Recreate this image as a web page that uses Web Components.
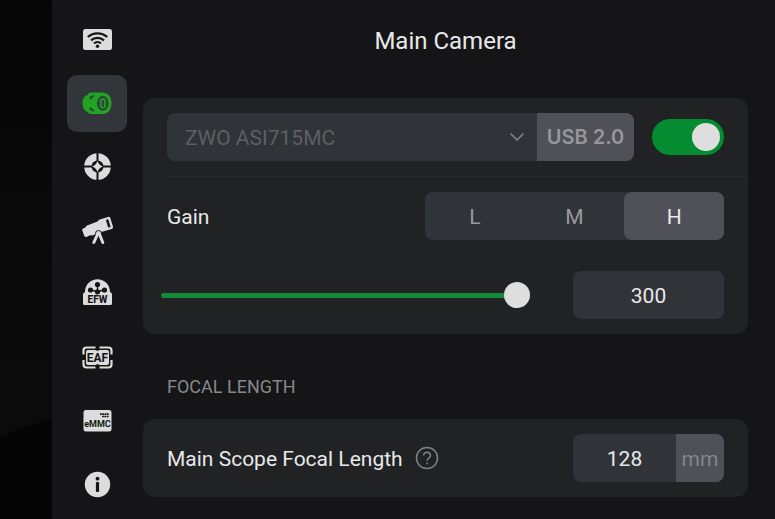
<!DOCTYPE html>
<html lang="en">
<head>
<meta charset="utf-8">
<meta name="viewport" content="width=device-width, initial-scale=1">
<title>Main Camera</title>
<style>
  :root {
    --panel: #151517;
    --card: #212224;
    --field: #303338;
    --raised: #505058;
    --green: #068c30;
    --knob: #dedede;
    --text: #e8e8e8;
    --muted: #9a9a9d;
  }
  body {
    margin: 0;
    background: #080808;
    color: var(--text);
    font-family: Roboto, "Liberation Sans", sans-serif;
    font-size: 21px;
    line-height: 24px;
  }
</style>
</head>
<body>
<camera-settings>
  <side-nav slot="nav">
    <nav-item label="Wi-Fi" icon="wifi"></nav-item>
    <nav-item label="Main camera" icon="camera" active></nav-item>
    <nav-item label="Guide camera" icon="guide"></nav-item>
    <nav-item label="Telescope" icon="scope"></nav-item>
    <nav-item label="Filter wheel" icon="efw"></nav-item>
    <nav-item label="Focuser" icon="eaf"></nav-item>
    <nav-item label="Storage" icon="emmc"></nav-item>
    <nav-item label="About" icon="info"></nav-item>
  </side-nav>
  <span slot="title">Main Camera</span>
  <settings-card>
    <camera-picker></camera-picker>
    <card-divider></card-divider>
    <gain-choice>Gain</gain-choice>
    <gain-slider></gain-slider>
  </settings-card>
  <section-title>FOCAL LENGTH</section-title>
  <settings-card>
    <length-field unit="mm" value="128">Main Scope Focal Length</length-field>
  </settings-card>
</camera-settings>

<script>
const RESET = `
  *, *::before, *::after { box-sizing: border-box; }
  button, input, select { font: inherit; color: inherit; margin: 0; padding: 0; border: 0; background: none; min-width: 0; }
  :focus-visible { outline: 2px solid #6b6b75; outline-offset: 2px; }
`;

function define(name, render) {
  customElements.define(name, class extends HTMLElement {
    constructor() {
      super();
      this.attachShadow({ mode: 'open' });
    }
    connectedCallback() {
      const t = document.createElement('template');
      t.innerHTML = render(this);
      this.shadowRoot.replaceChildren(t.content.cloneNode(true));
    }
  });
}

const L = '#dcdcdc', D = '#151517';
const ICONS = {
  wifi: `<rect x="3" y="7" width="29" height="21" rx="2.500" fill="${L}"/>
    <g fill="none" stroke="${D}" stroke-width="2.300"><path d="M7.800 15a14.500 14.500 0 0 1 19.400 0"/><path d="M11 18.400a9.600 9.600 0 0 1 13 0"/><path d="M14 21.500a5.200 5.200 0 0 1 7 0"/></g>
    <circle cx="17.500" cy="24.200" r="1.700" fill="${D}"/>`,
  camera: `<path d="M11 6.500H23.500Q31.500 8 31.500 17.300T23.500 28H11Q8 27.800 7.500 25.500H6.500Q2.500 23.500 2.500 17.300T6.500 9.200H7.500Q8 6.800 11 6.500z" fill="#22a322"/>
    <path d="M14.300 9.200Q10.200 9 9 12.600l2.200 1Q12 11 14.300 10.600zM14.300 25.400Q10.200 25.600 9 22l2.200-1Q12 23.600 14.300 24z" fill="#2b4a35"/>
    <ellipse cx="22.800" cy="17.300" rx="5.900" ry="7.500" fill="#294a33"/>
    <rect x="20.800" y="13.200" width="4" height="8.200" rx="1.200" fill="none" stroke="#22a322" stroke-width="1.500"/>`,
  guide: `<circle cx="17.500" cy="17.500" r="13.300" fill="${L}"/>
    <path d="M17.500 3v10M17.500 22v10M3 17.500h10M22 17.500h10" stroke="${D}" stroke-width="2"/>
    <circle cx="17.500" cy="17.500" r="6" fill="${D}"/>
    <path d="M17.500 12q1.400 4.100 5.500 5.500-4.100 1.400-5.500 5.500-1.400-4.100-5.500-5.500 4.100-1.400 5.500-5.500z" fill="${L}"/>`,
  scope: `<path d="M6.500 12.800L17.500 8.600l1.500-1.800 9-2.900q1.800-.4 2.400 1.300l2.600 8.500q.3 1.700-1.300 2.200L23 18.500l-3 .5-7.500 3.500-2.500-.3-3.500 1.700q-1.800.4-2.400-1.300L2.300 17.500q-.3-1.800 1.200-2.300l2-.6z" fill="${L}"/>
    <path d="M26.300 7.200l1.700-.5 2.200 7-1.700.5z" fill="${D}" stroke="${D}" stroke-width=".8"/>
    <circle cx="18.500" cy="20.500" r="3" fill="${L}" stroke="${D}"/>
    <path d="M17 22.500l-3.200 7M20 22.500l2.800 7" stroke="${L}" stroke-width="3" stroke-linecap="round"/>`,
  efw: `<path d="M5 16C5 8 11 3.200 17.500 3.200S30 8 30 16c1.500.5 2 1.300 2 3v8.500q0 1.500-1.500 1.500h-26Q3 29 3 27.500V19q0-2.500 2-3z" fill="${L}"/>
    <g fill="${D}"><circle cx="17.500" cy="8.500" r="2.600"/><circle cx="10.500" cy="14" r="2.600"/><circle cx="24.500" cy="14" r="2.600"/><circle cx="17.500" cy="15.800" r="2.600"/></g>
    <path d="M17.500 8v8M10.500 14l7 1.500 7-1.500" fill="none" stroke="${D}" stroke-width="1.300"/>
    <text x="17.500" y="27" text-anchor="middle" font-size="10" font-weight="800" fill="${D}">EFW</text>`,
  eaf: `<path d="M15.500 7.500h-9q-3 0-3 3v4M3.500 20v4.500q0 3 3 3h9M19.500 27.500h9q3 0 3-3V20M31.500 14.500v-4q0-3-3-3h-9" fill="none" stroke="${L}" stroke-width="2.200"/>
    <path d="M8 10h7.500l2 1 2-1H27q2 0 2 2v11q0 2-2 2h-7.500l-2-1-2 1H8q-2 0-2-2V12q0-2 2-2z" fill="${L}"/>
    <text x="17.500" y="22" text-anchor="middle" font-size="12" font-weight="700" fill="${D}">EAF</text>`,
  emmc: `<rect x="3.500" y="7" width="28" height="21.500" rx="2.500" fill="${L}"/>
    <path d="M20 11.200h9M22 13.500h7" stroke="${D}" stroke-width="1.700" stroke-dasharray="1.800 .5"/>
    <text x="17.500" y="24" text-anchor="middle" font-size="9" font-weight="700" fill="${D}">eMMC</text>`,
  info: `<circle cx="17.500" cy="17.500" r="12.700" fill="${L}"/>
    <circle cx="17.500" cy="11.700" r="1.900" fill="${D}"/><rect x="15.900" y="15" width="3.200" height="10" rx="1" fill="${D}"/>`
};

define('camera-settings', () => `
  <style>${RESET}
    :host { display: grid; grid-template-columns: 52px 91px minmax(0, 1fr); min-height: 100vh; background: var(--panel); }
    .sky { background: linear-gradient(#060607, #0b0b0c 75%); display: flex; align-items: flex-end; overflow: hidden; }
    .sky svg { display: block; width: 100%; height: 101px; }
    main { padding: 27px 27px 22px 0; }
    h1 { margin: 0 0 43px; text-align: center; font-size: 24px; line-height: 28px; font-weight: 400; }
  </style>
  <div class="sky"><svg viewBox="0 0 52 101" preserveAspectRatio="none" aria-hidden="true"><path d="M0 19Q26 7 52 1V101H0z" fill="#050506"/></svg></div>
  <slot name="nav"></slot>
  <main><h1><slot name="title"></slot></h1><slot></slot></main>`);

define('side-nav', () => `
  <style>${RESET}
    :host { display: grid; }
    nav { display: flex; flex-direction: column; align-items: center; justify-content: space-between; padding: 11px 1px 6px 0; }
  </style>
  <nav aria-label="Devices"><slot></slot></nav>`);

define('nav-item', el => `
  <style>${RESET}
    :host { display: block; }
    button { display: grid; place-items: center; width: 60px; height: 57px; border-radius: 10px; cursor: pointer; }
    :host([active]) button { background: #323539; }
    svg { display: block; width: 36px; height: 35px; }
  </style>
  <button type="button" aria-label="${el.getAttribute('label')}"${el.hasAttribute('active') ? ' aria-current="page"' : ''}>
    <svg viewBox="-1 0 36 35" aria-hidden="true">${ICONS[el.getAttribute('icon')]}</svg>
  </button>`);

define('settings-card', () => `
  <style>
    :host { display: block; padding: 15px 24px; border-radius: 12px; background: var(--card); }
  </style><slot></slot>`);

define('card-divider', () => `
  <style>:host { display: block; height: 1px; margin: 15px -24px 15px 0; background: #28292c; }</style>`);

define('section-title', () => `
  <style>
    :host { display: block; padding: 41px 24px 20px; }
    h2 { margin: 0; font-size: 18px; line-height: 24px; font-weight: 400; color: #88888b; }
  </style><h2><slot></slot></h2>`);

define('camera-picker', () => `
  <style>${RESET}
    :host { display: flex; align-items: center; gap: 18px; }
    .group { flex: 1; display: flex; height: 48px; border-radius: 8px; overflow: hidden; background: var(--field); }
    .pick { flex: 1; display: grid; min-width: 0; }
    .pick > * { grid-area: 1 / 1; }
    select { appearance: none; width: 100%; padding: 2px 40px 0 18px; color: #5d5f62; opacity: 1; }
    svg { align-self: center; justify-self: end; width: 16px; height: 10px; margin-right: 12px; pointer-events: none; }
    .usb { display: grid; place-items: center; width: 97px; background: var(--raised); color: #97979b; font: 600 20px/24px Inter, sans-serif; }
    .switch { appearance: none; display: flex; align-items: center; justify-content: flex-end; width: 72px; height: 36px; padding: 0 4px; border-radius: 18px; background: var(--green); cursor: pointer; }
    .switch::before { content: ""; width: 28px; height: 28px; border-radius: 50%; background: var(--knob); }
    .switch:not(:checked) { justify-content: flex-start; background: var(--raised); }
  </style>
  <div class="group">
    <div class="pick">
      <select aria-label="Camera" disabled><option>ZWO ASI715MC</option></select>
      <svg viewBox="0 0 16 10" aria-hidden="true"><path d="M1.500 1.500L8 8l6.500-6.500" fill="none" stroke="#85868a" stroke-width="1.500"/></svg>
    </div>
    <span class="usb">USB 2.0</span>
  </div>
  <input class="switch" type="checkbox" role="switch" aria-label="Camera connected" checked>`);

define('gain-choice', () => `
  <style>${RESET}
    :host { display: flex; align-items: center; justify-content: space-between; }
    #name { padding-top: 2px; }
    .choices { display: grid; grid-template-columns: repeat(3, 1fr); width: 299px; height: 48px; border-radius: 8px; background: var(--field); }
    label { display: grid; place-items: center; border-radius: 8px; color: var(--muted); cursor: pointer; }
    label > * { grid-area: 1 / 1; }
    label span { padding-top: 2px; }
    input { appearance: none; width: 100%; height: 100%; border-radius: 8px; cursor: pointer; }
    label:has(:checked) { background: var(--raised); color: var(--text); }
  </style>
  <span id="name"><slot></slot></span>
  <div class="choices" role="radiogroup" aria-labelledby="name">
    <label><input type="radio" name="gain"><span>L</span></label>
    <label><input type="radio" name="gain"><span>M</span></label>
    <label><input type="radio" name="gain" checked><span>H</span></label>
  </div>`);

define('gain-slider', () => `
  <style>${RESET}
    :host { display: flex; align-items: center; gap: 43px; margin: 31px 0 0 -6px; }
    .range { appearance: none; flex: 1; height: 26px; cursor: pointer; }
    .range::-webkit-slider-runnable-track { height: 5px; border-radius: 3px; background: #128a38; }
    .range::-webkit-slider-thumb { appearance: none; width: 26px; height: 26px; margin-top: -11px; border-radius: 50%; background: var(--knob); }
    .value { width: 151px; height: 48px; padding-top: 2px; border-radius: 8px; background: var(--field); text-align: center; }
  </style>
  <input class="range" type="range" min="0" max="300" value="300" aria-label="Gain">
  <input class="value" type="text" inputmode="numeric" value="300" aria-label="Gain value">`);

define('length-field', el => `
  <style>${RESET}
    :host { display: flex; align-items: center; gap: 12px; }
    label { padding-top: 2px; }
    .help { display: block; width: 24px; height: 24px; cursor: pointer; }
    .help svg { display: block; width: 24px; height: 24px; }
    .box { display: flex; width: 151px; height: 48px; margin-left: auto; border-radius: 8px; overflow: hidden; background: var(--field); }
    .box input { flex: 1; padding-top: 2px; text-align: center; }
    .unit { display: grid; place-items: center; width: 48px; padding-top: 2px; background: var(--raised); color: #85858a; }
  </style>
  <label for="len"><slot></slot></label>
  <button class="help" type="button" aria-label="Help">
    <svg viewBox="0 0 24 24" fill="none" stroke="#808184" stroke-width="1.500" aria-hidden="true"><circle cx="12" cy="12" r="10.500"/><path d="M8.600 9.500q.2-3.300 3.500-3.300 3.200.1 3.400 3.100 0 1.500-1.700 2.800-1.700 1.200-1.700 2.700"/><path d="M12.100 16.500v1.800"/></svg>
  </button>
  <span class="box"><input id="len" type="text" inputmode="numeric" value="${el.getAttribute('value')}"><span class="unit">${el.getAttribute('unit')}</span></span>`);
</script>
</body>
</html>
